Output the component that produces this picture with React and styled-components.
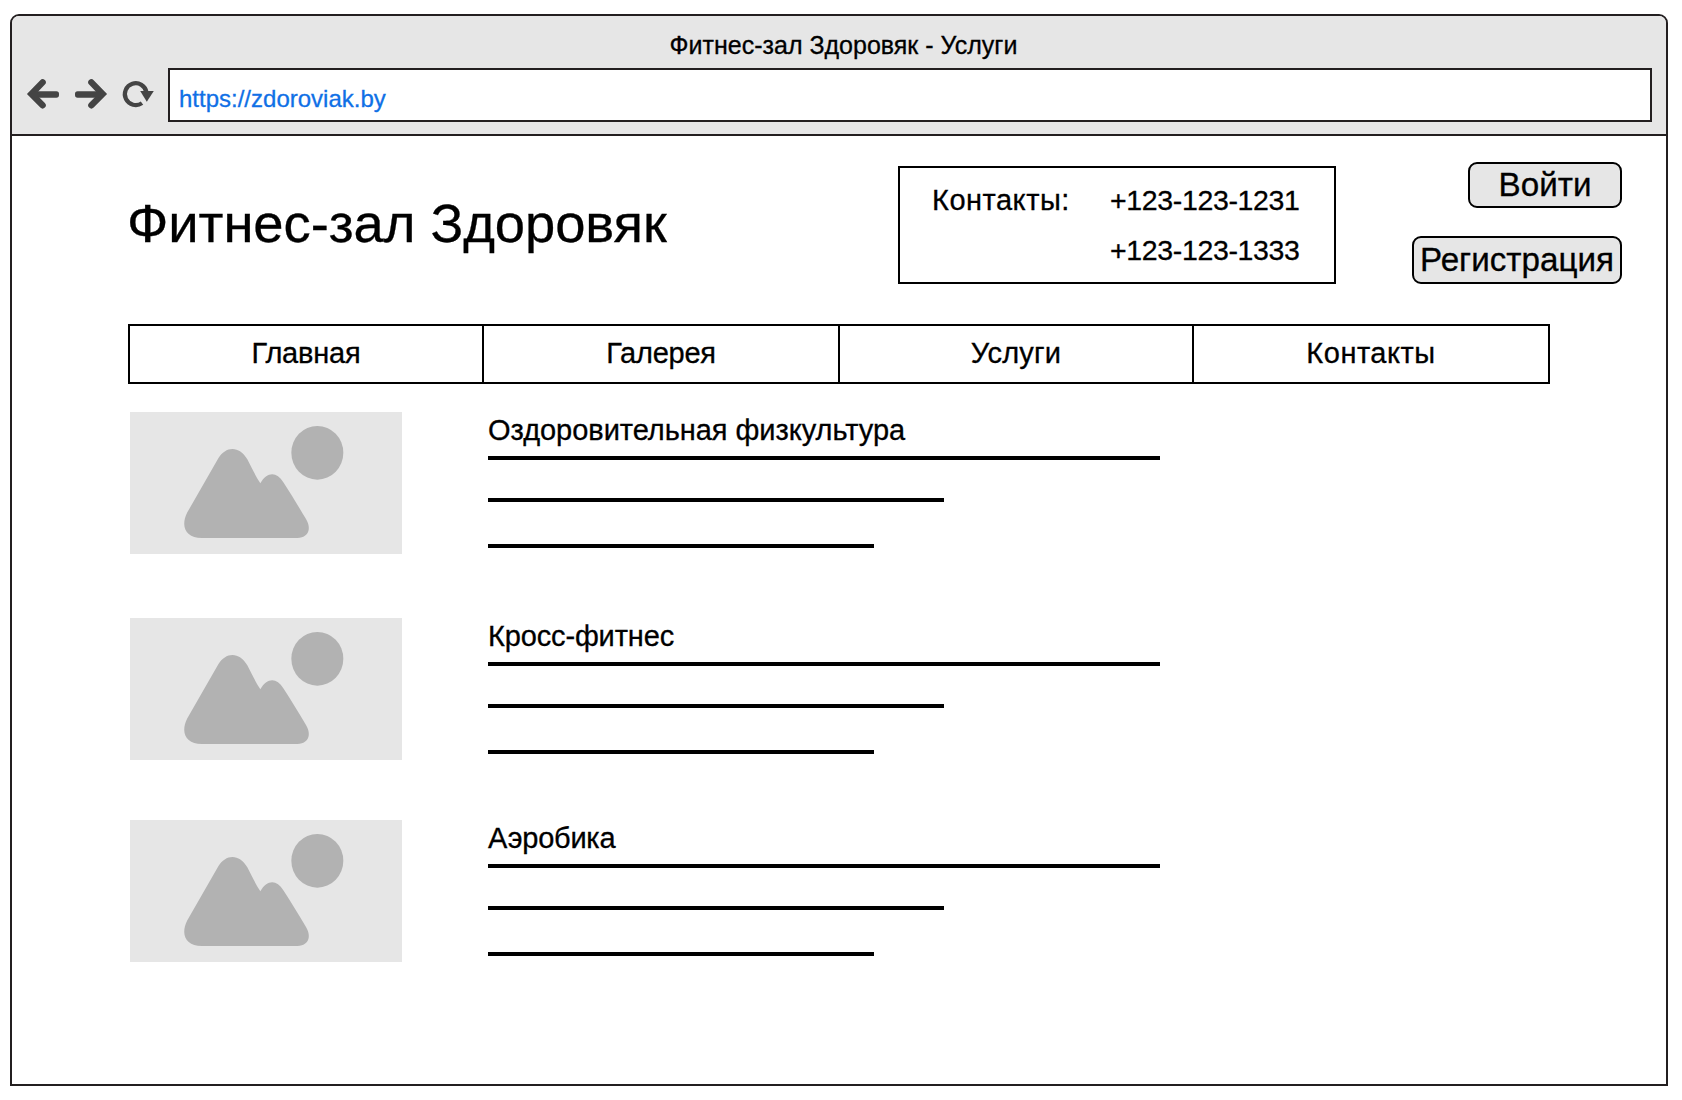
import React from 'react';
import styled, { createGlobalStyle } from 'styled-components';

const ink = '#231f20';
const panel = '#e6e6e6';

const GlobalStyle = createGlobalStyle`
  *, *::before, *::after { box-sizing: border-box; }
  body {
    margin: 0;
    background: #fff;
    color: #000;
    font-family: "Liberation Sans", Arial, Helvetica, sans-serif;
    -webkit-text-stroke: 0.3px currentColor;
  }
`;

const Frame = styled.div`
  width: 1658px;
  height: 1072px;
  margin: 14px 0 0 10px;
  border: 2px solid ${ink};
  border-radius: 9px 9px 0 0;
  background: #fff;
  overflow: hidden;
`;

const Chrome = styled.header`
  height: 120px;
  background: ${panel};
  border-bottom: 2px solid ${ink};
`;

const WindowTitle = styled.div`
  height: 52px;
  padding: 6px 0 0 9px;
  display: flex;
  align-items: center;
  justify-content: center;
  font-size: 25px;
  white-space: nowrap;
`;

const Toolbar = styled.div`
  display: flex;
  align-items: flex-start;
  gap: 16px;
  padding: 0 14px 0 15px;
`;

const IconButton = styled.button`
  flex: none;
  width: ${p => p.$width}px;
  height: 30px;
  margin: 11px 0 0;
  padding: 0;
  border: 0;
  background: none;
  color: #444;

  svg { display: block; overflow: visible; }
`;

const AddressBar = styled.div`
  flex: 1;
  height: 54px;
  margin-left: -2px;
  padding: 7px 0 0 9px;
  display: flex;
  align-items: center;
  border: 2px solid ${ink};
  background: #fff;
  color: #1070e6;
  font-size: 24px;
`;

const SiteHeader = styled.div`
  display: flex;
  align-items: flex-start;
  height: 188px;
  padding: 0 44px 0 115px;
`;

const SiteName = styled.h1`
  width: 771px;
  margin: 58px 0 0;
  font-size: 54.4px;
  font-weight: 400;
  line-height: 60px;
  letter-spacing: -0.08px;
  white-space: nowrap;
`;

const ContactBox = styled.div`
  display: grid;
  grid-template-columns: 178px 1fr;
  grid-template-rows: 50px 50px;
  align-items: center;
  width: 438px;
  height: 118px;
  margin-top: 30px;
  padding: 7px 0 0 32px;
  border: 2px solid #000;
  white-space: nowrap;
`;

const ContactLabel = styled.span`
  font-size: 29px;
  letter-spacing: 0.5px;
`;

const Phone = styled.span`
  grid-column: 2;
  font-size: 28.5px;
  letter-spacing: -0.35px;
`;

const AuthButtons = styled.div`
  display: flex;
  flex-direction: column;
  align-items: flex-end;
  gap: 28px;
  margin: 26px 0 0 auto;
`;

const AuthButton = styled.button`
  width: ${p => p.$width}px;
  height: ${p => p.$height}px;
  padding: 0 0 1px;
  border: 2px solid #000;
  border-radius: 9px;
  background: ${panel};
  color: #000;
  font: 400 33.2px/40px "Liberation Sans", Arial, sans-serif;
  white-space: nowrap;
`;

const Menu = styled.nav`
  display: grid;
  grid-template-columns: 352px 356px 354px 356px;
  width: 1422px;
  height: 60px;
  margin-left: 116px;
  border: 2px solid #000;
`;

const MenuItem = styled.a`
  display: flex;
  align-items: center;
  justify-content: center;
  padding-bottom: 2px;
  font-size: 29px;
  letter-spacing: ${p => p.$tracking || 0}px;

  & + & { border-left: 2px solid #000; }
`;

const Services = styled.main`
  padding: 28px 0 0 118px;
`;

const Service = styled.article`
  display: flex;
  gap: 86px;
  margin-bottom: ${p => p.$after}px;
`;

const Thumb = styled.svg`
  flex: none;
  display: block;
  width: 272px;
  height: 142px;
  background: ${panel};
  fill: #b2b2b2;
`;

const Summary = styled.div`
  height: 142px;
`;

const ServiceName = styled.h2`
  margin: 0 0 8px;
  font-size: 29px;
  font-weight: 400;
  line-height: 36px;
  letter-spacing: ${p => p.$tracking || 0}px;
  white-space: nowrap;
`;

const TextLine = styled.div`
  width: ${p => p.$width}px;
  height: 4px;
  margin-bottom: ${p => p.$after}px;
  background: #000;
`;

function Arrow({ flip }) {
  return (
    <svg width="32" height="30" viewBox="0 0 32 30">
      <g transform={flip ? 'translate(32 0) scale(-1 1)' : undefined}>
        <path
          d="M15.6 3.4L4.4 15L15.6 26.3"
          fill="none"
          stroke="currentColor"
          strokeWidth="6.4"
          strokeLinecap="round"
        />
        <rect x="6" y="12.2" width="26" height="6.5" rx="2.6" fill="currentColor" />
      </g>
    </svg>
  );
}

function Reload() {
  return (
    <svg width="31" height="30" viewBox="0 0 31 30">
      <path
        d="M19 24.1A10.9 10.9 0 1 1 23.5 13.4"
        fill="none"
        stroke="currentColor"
        strokeWidth="4.2"
      />
      <path d="M17.2 12H30.8L23.8 22.8Z" fill="currentColor" />
    </svg>
  );
}

function Placeholder() {
  return (
    <Thumb viewBox="0 0 816 426" preserveAspectRatio="none">
      <ellipse cx="562" cy="122.500" rx="78" ry="80.500" />
      <path d="M265 139C287 102 328 100 352 142C366 170 376 190 391 214C411 179 440 178 460 211C484 248 504 281 528 321C548 355 530 378 502 378H215C168 378 150 344 172 301Z" />
    </Thumb>
  );
}

const menu = [
  { label: 'Главная', tracking: -0.2 },
  { label: 'Галерея', tracking: -0.25 },
  { label: 'Услуги', tracking: 0.2 },
  { label: 'Контакты', tracking: 0.5 },
];

const services = [
  { name: 'Оздоровительная физкультура', after: 64, tracking: -0.04 },
  { name: 'Кросс-фитнес', after: 60, tracking: -0.15 },
  { name: 'Аэробика', after: 0, tracking: -0.25 },
];

export default function App() {
  return (
    <>
      <GlobalStyle />
      <Frame>
        <Chrome>
          <WindowTitle>Фитнес-зал Здоровяк - Услуги</WindowTitle>
          <Toolbar>
            <IconButton $width={32}><Arrow /></IconButton>
            <IconButton $width={32}><Arrow flip /></IconButton>
            <IconButton $width={31}><Reload /></IconButton>
            <AddressBar>https://zdoroviak.by</AddressBar>
          </Toolbar>
        </Chrome>
        <SiteHeader>
          <SiteName>Фитнес-зал Здоровяк</SiteName>
          <ContactBox>
            <ContactLabel>Контакты:</ContactLabel>
            <Phone>+123-123-1231</Phone>
            <Phone>+123-123-1333</Phone>
          </ContactBox>
          <AuthButtons>
            <AuthButton $width={154} $height={46}>Войти</AuthButton>
            <AuthButton $width={210} $height={48}>Регистрация</AuthButton>
          </AuthButtons>
        </SiteHeader>
        <Menu>
          {menu.map(item => (
            <MenuItem key={item.label} $tracking={item.tracking}>{item.label}</MenuItem>
          ))}
        </Menu>
        <Services>
          {services.map(service => (
            <Service key={service.name} $after={service.after}>
              <Placeholder />
              <Summary>
                <ServiceName $tracking={service.tracking}>{service.name}</ServiceName>
                <TextLine $width={672} $after={38} />
                <TextLine $width={456} $after={42} />
                <TextLine $width={386} $after={0} />
              </Summary>
            </Service>
          ))}
        </Services>
      </Frame>
    </>
  );
}
